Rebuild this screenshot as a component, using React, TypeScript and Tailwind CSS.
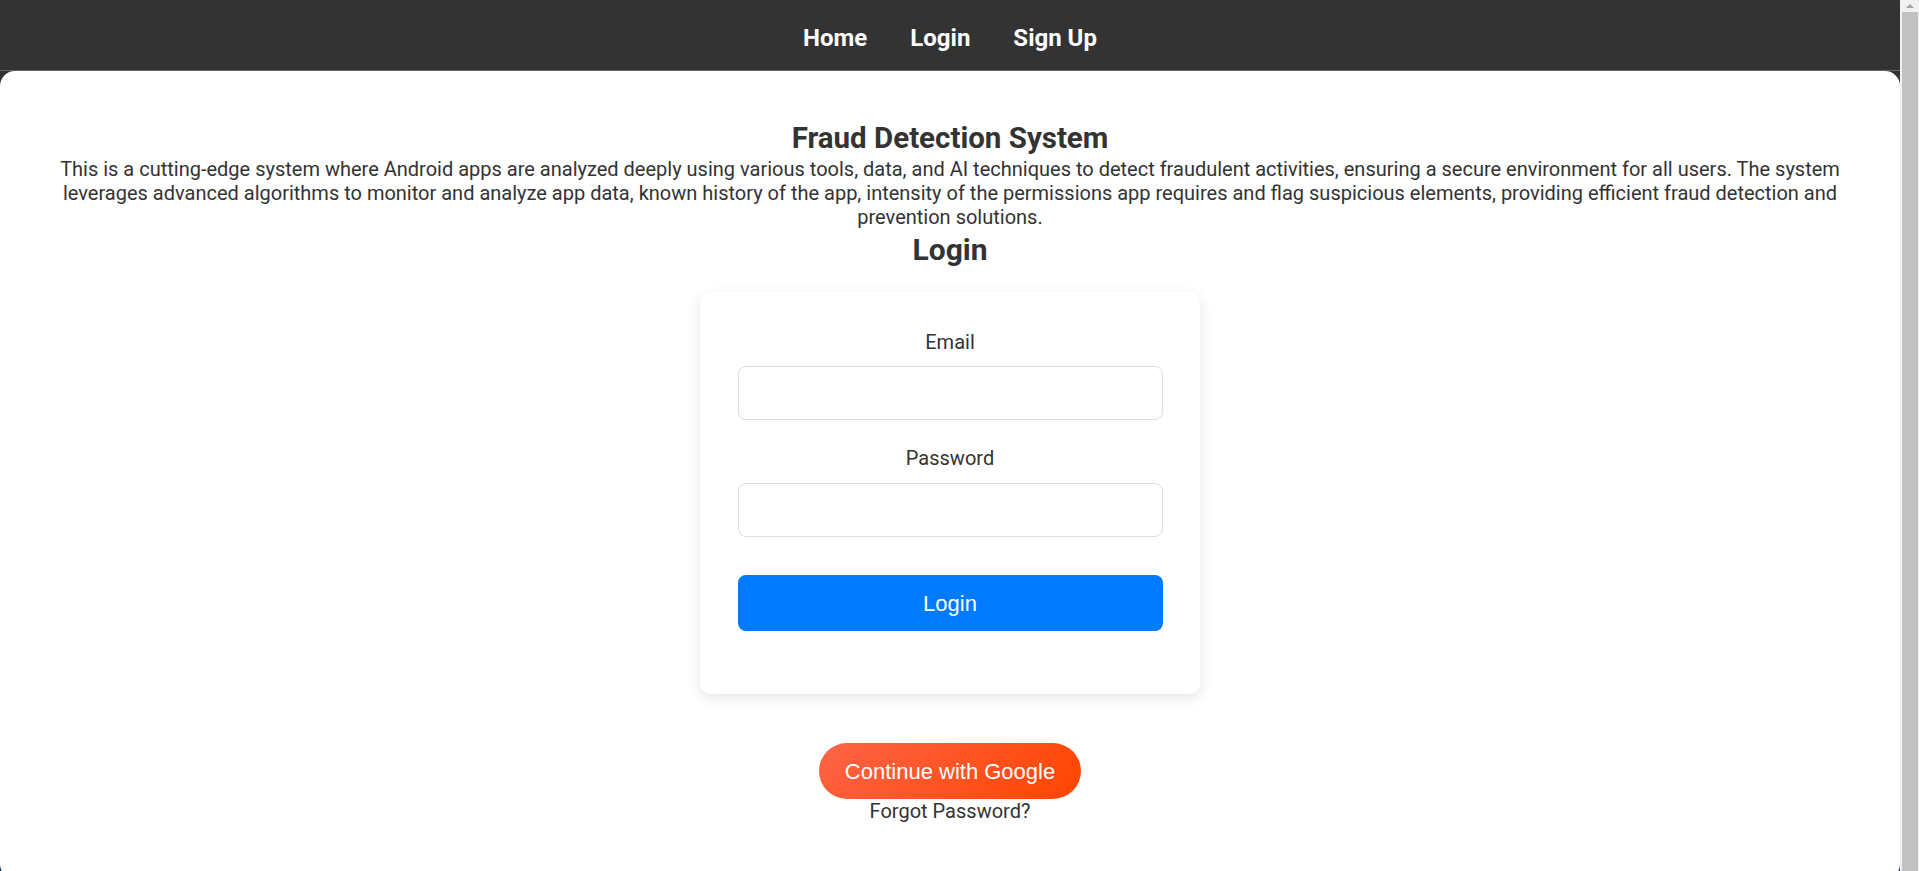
export default function App() {
  return (
    <div className="flex items-start bg-[#0b2a4d] font-['Roboto',sans-serif] text-[#333]">
      <div className="min-w-0 flex-1 bg-[linear-gradient(to_bottom,#333_0,#333_300px,#0b2a4d_300px)]">
        {/* top nav */}
        <nav className="flex h-[71px] items-center justify-center gap-[43px] border-b border-[#666] bg-[#333] pt-[6px] text-[24px] font-bold leading-[28px] text-white">
          <a href="#">Home</a>
          <a href="#">Login</a>
          <a href="#">Sign Up</a>
        </nav>

        <main className="flex flex-col items-center rounded-[15px] bg-white px-10 pb-[56px] pt-[50px] text-center">
          <h1 className="text-[29.5px] font-bold leading-[35px]">Fraud Detection System</h1>
          <p className="mt-px text-[20px] leading-[24px]">
            This is a cutting-edge system where Android apps are analyzed deeply using various tools, data, and AI
            techniques to detect fraudulent activities, ensuring a secure environment for all users. The system leverages
            advanced algorithms to monitor and analyze app data, known history of the app, intensity of the permissions app
            requires and flag suspicious elements, providing efficient fraud detection and prevention solutions.
          </p>
          <h2 className="mt-[3px] text-[30px] font-bold leading-[35px]">Login</h2>

          <div className="mt-[25px] flex w-[500px] flex-col items-center rounded-[10px] bg-white px-[37px] pb-[63px] pt-[38px] shadow-[0_4px_14px_rgba(0,0,0,0.1)]">
            <label className="mb-3 text-[20px] leading-[24px]">Email</label>
            <input type="email" className="mb-[26px] h-[54px] w-[425px] rounded-[8px] border border-[#ddd] px-3 outline-none" />
            <label className="mb-[13px] text-[20px] leading-[24px]">Password</label>
            <input type="password" className="h-[54px] w-[425px] rounded-[8px] border border-[#ddd] px-3 outline-none" />
            <button className="mt-[38px] h-[56px] w-[425px] rounded-[8px] bg-[#007bff] font-['Liberation_Sans',Arial,sans-serif] text-[22px] text-white">
              Login
            </button>
          </div>

          <button className="mt-[49px] h-[56px] rounded-full bg-[linear-gradient(135deg,#ff6347,#ff4500)] px-[26px] font-['Liberation_Sans',Arial,sans-serif] text-[22px] text-white">
            Continue with Google
          </button>
          <a href="#" className="text-[20px] leading-[24px]">Forgot Password?</a>
        </main>
      </div>

      {/* page scrollbar */}
      <div className="flex h-screen w-[19px] shrink-0 flex-col bg-[#f1f1f1] pl-[2px] pr-[1px]">
        <div className="flex h-[12px] items-center justify-center">
          <div className="h-0 w-0 border-x-[4px] border-b-[4px] border-x-transparent border-b-[#a3a3a3]" />
        </div>
        <div className="flex-1 bg-[#c1c1c1]" />
      </div>
    </div>
  );
}
